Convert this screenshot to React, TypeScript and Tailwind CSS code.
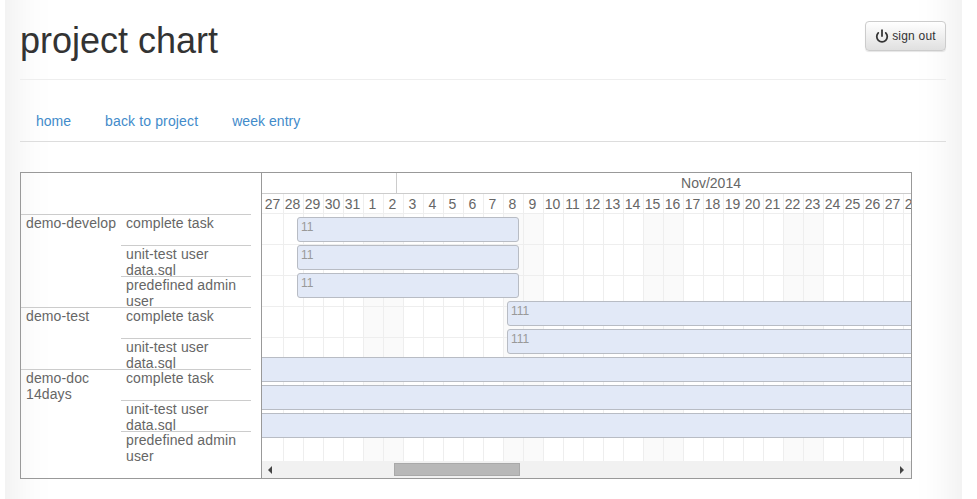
import React from 'react';
import { Power } from 'lucide-react';

const days = [27, 28, 29, 30, 31, ...Array.from({ length: 28 }, (_, i) => i + 1)];
const weekend = [1, 2, 8, 9, 15, 16, 22, 23];

const groups = [
  { name: 'demo-develop', tasks: ['complete task', 'unit-test user data.sql', 'predefined admin user'] },
  { name: 'demo-test', tasks: ['complete task', 'unit-test user data.sql'] },
  { name: 'demo-doc 14days', tasks: ['complete task', 'unit-test user data.sql', 'predefined admin user'] },
];

const bars = [
  { top: 'top-[44px]', left: 'left-[35px] w-[222px] rounded-[3px]', label: '11' },
  { top: 'top-[72px]', left: 'left-[35px] w-[222px] rounded-[3px]', label: '11' },
  { top: 'top-[100px]', left: 'left-[35px] w-[222px] rounded-[3px]', label: '11' },
  { top: 'top-[128px]', left: 'left-[245px] w-[420px] rounded-l-[3px]', label: '111' },
  { top: 'top-[156px]', left: 'left-[245px] w-[420px] rounded-l-[3px]', label: '111' },
  { top: 'top-[184px]', left: '-left-[2px] w-[662px]', label: '' },
  { top: 'top-[212px]', left: '-left-[2px] w-[662px]', label: '' },
  { top: 'top-[240px]', left: '-left-[2px] w-[662px]', label: '' },
];

function TaskLabels() {
  return (
    <div className="h-[264px] overflow-hidden tracking-[0.12px]">
      {groups.map((g) => (
        <div key={g.name} className="mr-[10px] flex border-t border-[#ccc]">
          <div className="w-[100px] shrink-0 pl-[5px]">{g.name}</div>
          <div className="flex-1">
            {g.tasks.map((t, i) => (
              <div
                key={t}
                className={`overflow-hidden px-[5px] ${i > 0 ? 'h-[31px] border-t border-[#ccc]' : 'h-[30px]'}`}
              >
                {t}
              </div>
            ))}
          </div>
        </div>
      ))}
    </div>
  );
}

function Timeline() {
  return (
    <div className="relative flex-1 overflow-hidden">
      <div className="flex h-[21px] border-b border-[#ccc]">
        <div className="w-[135px] shrink-0 border-r border-[#ccc]" />
        <div className="w-[628px] shrink-0 text-center leading-[20px]">Nov/2014</div>
      </div>
      <div className="flex h-[20px] w-max border-b border-[#eee] pl-[2px]">
        {days.map((d, i) => (
          <div key={i} className="w-5 shrink-0 border-r border-[#eee] pr-[2px] text-center leading-[20px]">
            {d}
          </div>
        ))}
      </div>
      <div className="h-[247px] overflow-hidden">
        {Array.from({ length: 8 }).map((_, r) => (
          <div key={r} className="flex h-[31px] w-max border-b border-[#eee] pl-[2px]">
            {days.map((d, i) => (
              <div
                key={i}
                className={`w-5 shrink-0 border-r border-[#eee] ${i > 4 && weekend.includes(d) ? 'bg-[#fafafa]' : ''}`}
              />
            ))}
          </div>
        ))}
      </div>
      {bars.map((b) => (
        <div
          key={b.top}
          className={`absolute h-[25px] border border-[#b8bcc4] bg-[#e2e9f7] px-[3px] text-xs leading-[18px] text-[#999] ${b.top} ${b.left}`}
        >
          {b.label}
        </div>
      ))}
      <div className="relative flex h-[17px] items-center justify-between bg-[#f1f1f1] pl-[6px] pr-[7px]">
        <span className="h-0 w-0 border-y-[4px] border-r-[4px] border-y-transparent border-r-[#444]" />
        <span className="absolute left-[132px] top-[2px] h-[13px] w-[126px] border border-[#a9a9a9] bg-[#b8b8b8]" />
        <span className="h-0 w-0 border-y-[4px] border-l-[4px] border-y-transparent border-l-[#444]" />
      </div>
    </div>
  );
}

export default function App() {
  return (
    <div className="h-[499px] overflow-hidden bg-white font-['Liberation_Sans',Arial,sans-serif] text-sm text-[#666]">
      <div className="-mt-[60px] ml-[5px] h-[620px] w-[957px] pl-[15px] pr-[16px] pt-[60px] shadow-[inset_0_0_50px_rgba(0,0,0,0.1)]">
        <div className="flex h-[80px] items-start justify-between border-b border-[#eee]">
          <h1 className="mt-[21px] text-[36px] leading-[40px] text-[#333]">project chart</h1>
          <button className="mt-[21px] flex h-[30px] w-[81px] items-center justify-center gap-[3px] rounded-[4px] border border-[#ccc] bg-gradient-to-b from-white to-[#e0e0e0] text-xs tracking-[0.2px] text-[#333] shadow-[0_1px_1px_rgba(0,0,0,0.1)]">
            <Power size={14} strokeWidth={3} />
            sign out
          </button>
        </div>
        <nav className="flex h-[62px] items-center gap-[2px] border-b border-[#ddd] pt-[20px] text-[#428bca]">
          <a className="px-4">home</a>
          <a className="px-4 tracking-[0.14px]">back to project</a>
          <a className="px-4 tracking-[0.05px]">week entry</a>
        </nav>
        <div className="mt-[30px] flex h-[307px] w-[892px] border border-[#999] leading-[16px]">
          <div className="w-[241px] shrink-0 border-r border-[#999] pt-[41px]">
            <TaskLabels />
          </div>
          <Timeline />
        </div>
      </div>
    </div>
  );
}
